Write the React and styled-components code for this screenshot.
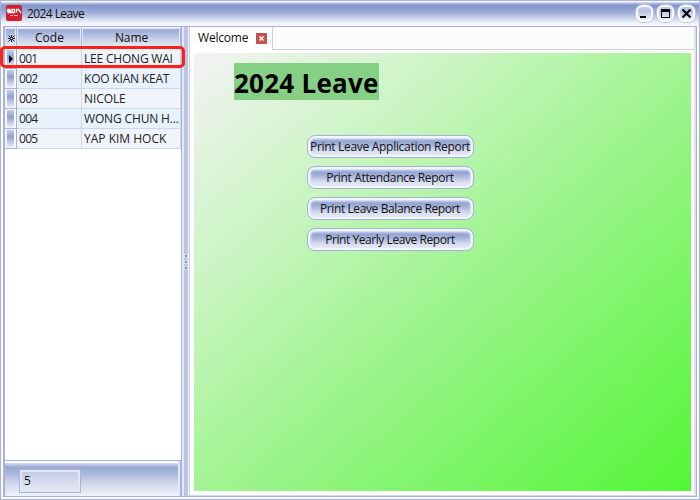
import React from "react";
import styled, { createGlobalStyle } from "styled-components";

const Global = createGlobalStyle`
  *{box-sizing:border-box}
  body{margin:0;overflow:hidden;background:#fff}
`;
const bar = "linear-gradient(#9aa9d4 0%, #a5b2d9 20%, #cdd4ea 62%, #eef1f9 100%)";

const Window = styled.div`
  width:700px;height:500px;display:flex;flex-direction:column;
  border:1px solid #a9b2dc;background:#fdfdff;
  font:12px/16px "Open Sans","Noto Sans",sans-serif;color:#222;
`;
const TitleBar = styled.header`
  height:25px;flex:none;display:flex;align-items:center;padding:1px 3px 1px 5px;
  background:linear-gradient(#fff 0 1px,#dfe4f4 1px,#8397cb 4px,#8fa1d1 8px,#a8b5db 13px,#d3daee 18px,#f1f3fa 22px,#f6f8fd 25px);
`;
const Logo = styled.svg`width:16px;height:16px;flex:none;margin:-1px 5px 0 0;`;
const Text = styled.span`letter-spacing:${p => p.$ls || 0}px;white-space:nowrap;`;
const TitleText = styled(Text)`flex:1;color:#111;margin-top:1px;`;
const WinButtons = styled.div`display:flex;gap:2px;`;
const WinButton = styled.svg`width:19px;height:19px;display:block;`;
const Body = styled.div`
  flex:1;min-height:0;margin:0 2px 2px;display:flex;
  border:1px solid #a9b2dc;border-left-width:2px;
`;
const Sidebar = styled.aside`width:176px;flex:none;display:flex;flex-direction:column;background:#fff;`;
const GridRow = styled.div`
  display:grid;grid-template-columns:12px 65px 99px;height:20px;
  background:${p => p.$alt ? "#e7f2fd" : "#f1f5fb"};
`;
const GridHead = styled(GridRow)`
  height:22px;background:${bar};border-top:1px solid #eef1fa;border-bottom:1px solid #a9b2dc;
`;
const HeadCell = styled.div`
  color:#111;line-height:20px;padding-left:1px;
  border-right:1px solid #a9b2dc;box-shadow:inset 1px 1px #e3e8f5, inset -1px -1px #e3e8f5;
  display:flex;align-items:center;justify-content:center;
`;
const Indicator = styled.div`
  display:flex;align-items:center;justify-content:center;
  border-right:1px solid #a9aedd;border-bottom:1px solid #a9aedd;
  background:linear-gradient(#c5cfe8,#91a1cf 40%,#e7ebf6) 2px 1px/7px 17px no-repeat #f5f7fc;
`;
const Cell = styled.div`
  border-right:1px solid #cdd6ef;border-bottom:1px solid #cdd6ef;
  padding-left:2px;line-height:20px;overflow:hidden;white-space:nowrap;
`;
const Highlight = styled.div`
  position:absolute;left:0;top:46px;width:185px;height:22px;
  border:3px solid #fb2217;border-radius:5px;
`;
const Footer = styled.footer`
  margin-top:auto;height:36px;border-top:1px solid #a9b2dc;border-right:1px solid #a9b2dc;
  padding:8px 0 0 14px;
  background:linear-gradient(#fff 0 2px,#dce2f2 2px,#9aa9d4 6px,#a9b5da 12px,#ccd4e9 21px,#edf0f8 34px);
  box-shadow:inset -2px 0 #e4e8f5;
`;
const Total = styled.div`
  width:62px;height:24px;border:1px solid #a9b2dc;padding-left:4px;line-height:22px;color:#111;
  box-shadow:inset 2px 2px #e4e7f4,inset -2px -2px #e4e7f4;background:linear-gradient(#c1cae5,#e6eaf5);
`;
const Splitter = styled.div`
  width:9px;flex:none;display:flex;flex-direction:column;align-items:center;justify-content:center;gap:4px;
  background:linear-gradient(90deg,#a9b2dc 0 1px,#e3e8f6 1px 3px,#bcc6e4 3px 7px,#eef1fa 7px 8px,#d0d3de 8px 9px);
`;
const Grip = styled.i`width:2px;height:2px;background:#8291c5;box-shadow:0 0 0 1px #d6dcef;`;
const Main = styled.main`
  flex:1;min-width:0;display:flex;flex-direction:column;background:#fff;
  border-right:2px solid #e2e2e6;border-bottom:1px solid #d8d8de;
`;
const TabStrip = styled.div`display:flex;height:23px;flex:none;`;
const Tab = styled.div`
  width:83px;border-right:1px solid #d3d3d7;background:#fff;display:flex;
  align-items:center;justify-content:space-between;padding:0 5px 1px 8px;color:#111;
`;
const StripRest = styled.div`flex:1;background:#fcfcfe;border-bottom:1px solid #d3d3d7;`;
const Close = styled.svg`width:11px;height:11px;`;
const Page = styled.section`
  flex:1;margin:3px 3px 4px 4px;padding:10px 0 0 40px;
  background:linear-gradient(to bottom right,#f4f2f4 0%,#c8f5c0 28%,#a3f494 50%,#52f636 100%);
`;
const Heading = styled.h1`
  margin:0;width:145px;height:37px;background:#86d086;color:#000;
  font:bold 26px/41px "Open Sans","Noto Sans",sans-serif;white-space:nowrap;letter-spacing:${p => p.$ls}px;
`;
const Reports = styled.div`display:flex;flex-direction:column;gap:8px;margin:35px 0 0 73px;width:167px;`;
const ReportButton = styled.button`
  height:23px;padding:0 1px 0 0;border:1px solid #a5b1da;border-radius:8px;color:#111;
  display:flex;align-items:center;justify-content:center;font:inherit;
  background:linear-gradient(#d2d9ee 1px,#93a4d2 5px,#a6b3da 9px,#d1d8ec 14px,#f0f2f9 20px);
  box-shadow:inset 0 0 0 2px #f3f5fc, inset 0 0 2px 3px #dfe4f4;
`;

const rows = [["001", "LEE CHONG WAI", -0.2], ["002", "KOO KIAN KEAT", -0.2], ["003", "NICOLE", -0.1], ["004", "WONG CHUN H...", -0.15], ["005", "YAP KIM HOCK", 0]];
const reports = [["Print Leave Application Report", -0.3], ["Print Attendance Report", -0.33], ["Print Leave Balance Report", -0.4], ["Print Yearly Leave Report", -0.43]];

function ControlButton({ children }) {
  return (
    <WinButton viewBox="0 0 19 19" aria-hidden="true">
      <defs><linearGradient id="wb" x2="0" y2="1"><stop stopColor="#c5cee8" /><stop offset=".35" stopColor="#b9c4e3" /><stop offset="1" stopColor="#f6f8fd" /></linearGradient></defs>
      <rect x=".5" y=".5" width="18" height="18" rx="7" fill="none" stroke="#b9c5e6" />
      <rect x="2" y="2" width="15" height="15" rx="5" fill="url(#wb)" stroke="#f7f9ff" strokeWidth="2" />
      {children}
    </WinButton>
  );
}

export default function App() {
  return (
    <Window>
      <Global />
      <TitleBar>
        <Logo viewBox="0 0 16 16">
          <rect width="16" height="16" rx="2" fill="#d3202f" />
          <path d="M1.5 4.5h3M1.5 4.5v1.5h3v1.5h-3M6 4.5h2.5v3H6zM10.5 4v3.5M10.5 4.5l2 0l2.5 3.5" fill="none" stroke="#fff" strokeWidth="1.3" />
          <path d="M4 10.5h3M8 10.5h4" stroke="#f4a9ae" />
        </Logo>
        <TitleText $ls={-0.58}>2024 Leave</TitleText>
        <WinButtons>
          <ControlButton><path d="M5 12h6v2H5z" /></ControlButton>
          <ControlButton><path fillRule="evenodd" d="M5 5h9v9H5zM6 8h7v5H6z" /></ControlButton>
          <ControlButton><path d="M5.5 5.5l8 8M13.5 5.5l-8 8" stroke="#000" strokeWidth="2.2" /></ControlButton>
        </WinButtons>
      </TitleBar>
      <Body>
        <Sidebar>
          <GridHead>
            <HeadCell><svg width="9" height="9" viewBox="0 0 9 9"><path d="M4.5 1v7M1 4.5h7M1.5 1.5l6 6M7.5 1.5l-6 6" stroke="#111" strokeWidth=".9" /><circle cx="4.5" cy="4.5" r=".8" fill="#d8def0" /></svg></HeadCell>
            <HeadCell><Text>Code</Text></HeadCell>
            <HeadCell><Text $ls={-0.1}>Name</Text></HeadCell>
          </GridHead>
          {rows.map(([code, name, ls], i) => (
            <GridRow key={code} $alt={i % 2 === 1}>
              <Indicator>{i === 0 && <svg width="4" height="8"><path d="M0 0l4 4-4 4z" /></svg>}</Indicator>
              <Cell><Text $ls={-0.7}>{code}</Text></Cell>
              <Cell><Text $ls={ls}>{name}</Text></Cell>
            </GridRow>
          ))}
          <Footer><Total>5</Total></Footer>
        </Sidebar>
        <Splitter><Grip /><Grip /><Grip /></Splitter>
        <Main>
          <TabStrip>
            <Tab><Text $ls={-0.2}>Welcome</Text><Close viewBox="0 0 11 11"><path fill="#c75050" d="M0 0h11v11H0z" /><path d="M3.5 3.5l4 4M7.5 3.5l-4 4" stroke="#fff" strokeWidth="1.5" /></Close></Tab>
            <StripRest />
          </TabStrip>
          <Page>
            <Heading $ls={0.25}>2024 Leave</Heading>
            <Reports>
              {reports.map(([label, ls]) => <ReportButton key={label}><Text $ls={ls}>{label}</Text></ReportButton>)}
            </Reports>
          </Page>
        </Main>
      </Body>
      <Highlight />
    </Window>
  );
}
